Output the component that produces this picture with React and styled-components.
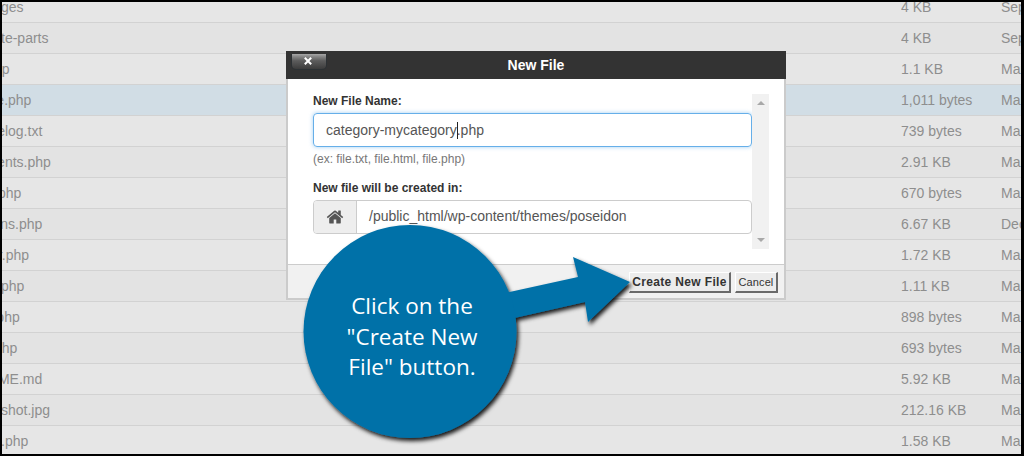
import React from "react";
import styled, { createGlobalStyle } from "styled-components";

const Global = createGlobalStyle`
  html, body { margin: 0; padding: 0; background: #000; }
  body { font-family: "Liberation Sans", Arial, sans-serif; }
`;

const Frame = styled.div`
  position: relative;
  box-sizing: border-box;
  width: 1024px;
  height: 456px;
  border: 2px solid #000;
  border-right-width: 3px;
  background: #e4e4e4;
  overflow: hidden;
`;

const FileList = styled.div`
  margin-top: -10px;
`;

const Row = styled.div`
  box-sizing: border-box;
  height: 31px;
  display: grid;
  grid-template-columns: 899px 100px 1fr;
  align-items: center;
  border-bottom: 1px solid #d2d2d2;
  font-size: 14px;
  color: #8e8e8e;
  white-space: nowrap;
  background: ${(p) => (p.$active ? "#d1dde5" : p.$odd ? "#e6e6e6" : "#e3e3e3")};
`;

const Name = styled.div`
  text-indent: -43px;
  overflow: hidden;
`;

const Size = styled.div`
  overflow: hidden;
`;

const DateCell = styled.div`
  overflow: hidden;
`;

const Modal = styled.div`
  position: absolute;
  left: 284px;
  top: 49px;
  box-sizing: border-box;
  width: 500px;
  height: 249px;
  display: flex;
  flex-direction: column;
  border: 2px solid #cbcbcb;
  border-top: 0;
  background: #fff;
`;

const ModalHeader = styled.div`
  position: relative;
  flex: none;
  height: 28px;
  margin: 0 -2px;
  background: #333;
  color: #fff;
  font-size: 14px;
  font-weight: 700;
  display: flex;
  align-items: center;
  justify-content: center;
`;

const CloseButton = styled.div`
  position: absolute;
  left: 5px;
  top: 3px;
  width: 36px;
  height: 16px;
  box-sizing: border-box;
  border-radius: 1px 1px 5px 5px;
  border: 1px solid #2c3134;
  border-top: 0;
  background: linear-gradient(#a8a8a8 0, #8a8a8a 15%, #5c5c5c 45%, #3c3c3c 100%);
  display: flex;
  justify-content: center;
  padding: 3px 2px 0 0;
`;

const ModalBody = styled.div`
  flex: 1;
  min-height: 0;
  display: flex;
  padding: 15px 16px 15px 25px;
`;

const Form = styled.div`
  width: 439px;
  flex: none;
`;

const Label = styled.div`
  font-size: 12px;
  line-height: 14px;
  font-weight: 700;
  color: #333;
  margin-bottom: 5px;
`;

const NameInput = styled.div`
  box-sizing: border-box;
  height: 34px;
  border: 1px solid #66afe9;
  border-radius: 4px;
  box-shadow: 0 0 4px rgba(102, 175, 233, 0.6);
  padding: 0 12px;
  display: flex;
  align-items: center;
  font-size: 14px;
  color: #555;
`;

const Caret = styled.span`
  display: inline-block;
  width: 1px;
  height: 17px;
  margin-right: -1px;
  background: #222;
`;

const Hint = styled.div`
  font-size: 12px;
  line-height: 14px;
  color: #777;
  margin: 5px 0 15px;
`;

const PathGroup = styled.div`
  box-sizing: border-box;
  height: 34px;
  display: flex;
  border: 1px solid #ccc;
  border-radius: 4px;
  font-size: 14px;
  color: #555;
`;

const Addon = styled.div`
  width: 42px;
  flex: none;
  background: #eee;
  border-right: 1px solid #ccc;
  border-radius: 3px 0 0 3px;
  display: flex;
  align-items: center;
  justify-content: center;
  color: #555;
`;

const PathText = styled.div`
  display: flex;
  align-items: center;
  padding: 0 0 2px 12px;
`;

const Scrollbar = styled.div`
  width: 17px;
  flex: none;
  background: #f1f1f1;
  display: flex;
  flex-direction: column;
  justify-content: space-between;
  align-items: center;
  padding: 7px 0;
`;

const ScrollArrow = styled.span`
  width: 0;
  height: 0;
  border-left: 4px solid transparent;
  border-right: 4px solid transparent;
  ${(p) => (p.$down ? "border-top: 4px solid #a8a8a8;" : "border-bottom: 4px solid #a8a8a8;")}
`;

const ModalFooter = styled.div`
  flex: none;
  box-sizing: border-box;
  height: 34px;
  background: #f1f1f1;
  border-top: 1px solid #ccc;
  display: flex;
  justify-content: flex-end;
  align-items: flex-start;
  gap: 4px;
  padding: 7px 6px 0 0;
`;

const Button = styled.div`
  box-sizing: border-box;
  height: 21px;
  width: ${(p) => p.$w}px;
  display: flex;
  align-items: center;
  justify-content: center;
  background: #ececec;
  border-style: solid;
  border-width: 1px 2px 2px 1px;
  border-color: #fff #6a6a6a #6a6a6a #fff;
  font-size: ${(p) => (p.$primary ? "12px" : "11px")};
  font-weight: ${(p) => (p.$primary ? 700 : 400)};
  letter-spacing: ${(p) => (p.$primary ? "0.35px" : "0.1px")};
  color: #333;
`;

const CalloutArt = styled.svg`
  position: absolute;
  left: -2px;
  top: -2px;
  width: 1024px;
  height: 456px;
  pointer-events: none;
`;

const CalloutText = styled.div`
  position: absolute;
  left: 325px;
  top: 289px;
  width: 170px;
  text-align: center;
  font-family: "Open Sans", sans-serif;
  font-size: 22.5px;
  line-height: 30.5px;
  color: #fff;
`;

const files = [
  ["languages", "4 KB", "Sep 12, 2017"],
  ["template-parts", "4 KB", "Sep 12, 2017"],
  ["404.php", "1.1 KB", "Mar 10, 2017"],
  ["archive.php", "1,011 bytes", "Mar 10, 2017"],
  ["changelog.txt", "739 bytes", "Mar 10, 2017"],
  ["comments.php", "2.91 KB", "Mar 10, 2017"],
  ["footer.php", "670 bytes", "Mar 10, 2017"],
  ["functions.php", "6.67 KB", "Dec 12, 2017"],
  ["header.php", "1.72 KB", "Mar 10, 2017"],
  ["image.php", "1.11 KB", "Mar 10, 2017"],
  ["index.php", "898 bytes", "Mar 10, 2017"],
  ["page.php", "693 bytes", "Mar 10, 2017"],
  ["README.md", "5.92 KB", "Mar 10, 2017"],
  ["screenshot.jpg", "212.16 KB", "Mar 10, 2017"],
  ["search.php", "1.58 KB", "Mar 10, 2017"],
];

export default function App() {
  return (
    <Frame>
      <Global />
      <FileList>
        {files.map(([name, size, date], i) => (
          <Row key={name} $active={i === 3} $odd={i % 2 === 0}>
            <Name>{name}</Name>
            <Size>{size}</Size>
            <DateCell>{date}</DateCell>
          </Row>
        ))}
      </FileList>

      <Modal>
        <ModalHeader>
          <CloseButton>
            <svg width="8" height="8" viewBox="0 0 8 8">
              <path d="M0.8 0.8 L7.2 7.2 M7.2 0.8 L0.8 7.2" stroke="#fff" strokeWidth="2" fill="none" />
            </svg>
          </CloseButton>
          New File
        </ModalHeader>
        <ModalBody>
          <Form>
            <Label>New File Name:</Label>
            <NameInput>
              category-mycategory<Caret />.php
            </NameInput>
            <Hint>(ex: file.txt, file.html, file.php)</Hint>
            <Label>New file will be created in:</Label>
            <PathGroup>
              <Addon>
                <svg width="18" height="18" viewBox="0 0 1792 1792" fill="currentColor">
                  <path d="M1472 992v480q0 26-19 45t-45 19h-384v-384H768v384H384q-26 0-45-19t-19-45V992q0-1 .5-3t.5-3l575-474 575 474q1 2 1 6zm223-69l-62 74q-8 9-21 11h-3q-13 0-21-7L896 424l-692 577q-12 8-24 7-13-2-21-11l-62-74q-8-10-7-23.5t11-21.5l719-599q32-26 76-26t76 26l244 204V292q0-14 9-23t23-9h192q14 0 23 9t9 23v408l219 182q10 8 11 21.5t-7 23.5z" />
                </svg>
              </Addon>
              <PathText>/public_html/wp-content/themes/poseidon</PathText>
            </PathGroup>
          </Form>
          <Scrollbar>
            <ScrollArrow />
            <ScrollArrow $down />
          </Scrollbar>
        </ModalBody>
        <ModalFooter>
          <Button $primary $w={102}>Create New File</Button>
          <Button $w={43}>Cancel</Button>
        </ModalFooter>
      </Modal>

      <CalloutArt viewBox="0 0 1024 456">
        <defs>
          <filter id="callout-shadow" x="-10%" y="-10%" width="125%" height="125%">
            <feDropShadow dx="2" dy="3" stdDeviation="2" floodColor="#000" floodOpacity="0.9" />
          </filter>
        </defs>
        <g filter="url(#callout-shadow)" fill="#0071a8">
          <path d="M505 293 L578 277 L573 257 L630 282 L588 322 L585 302 L510 319 Z" />
          <circle cx="410" cy="331.5" r="106.5" />
        </g>
      </CalloutArt>
      <CalloutText>
        Click on the
        <br />
        "Create New
        <br />
        File" button.
      </CalloutText>
    </Frame>
  );
}
